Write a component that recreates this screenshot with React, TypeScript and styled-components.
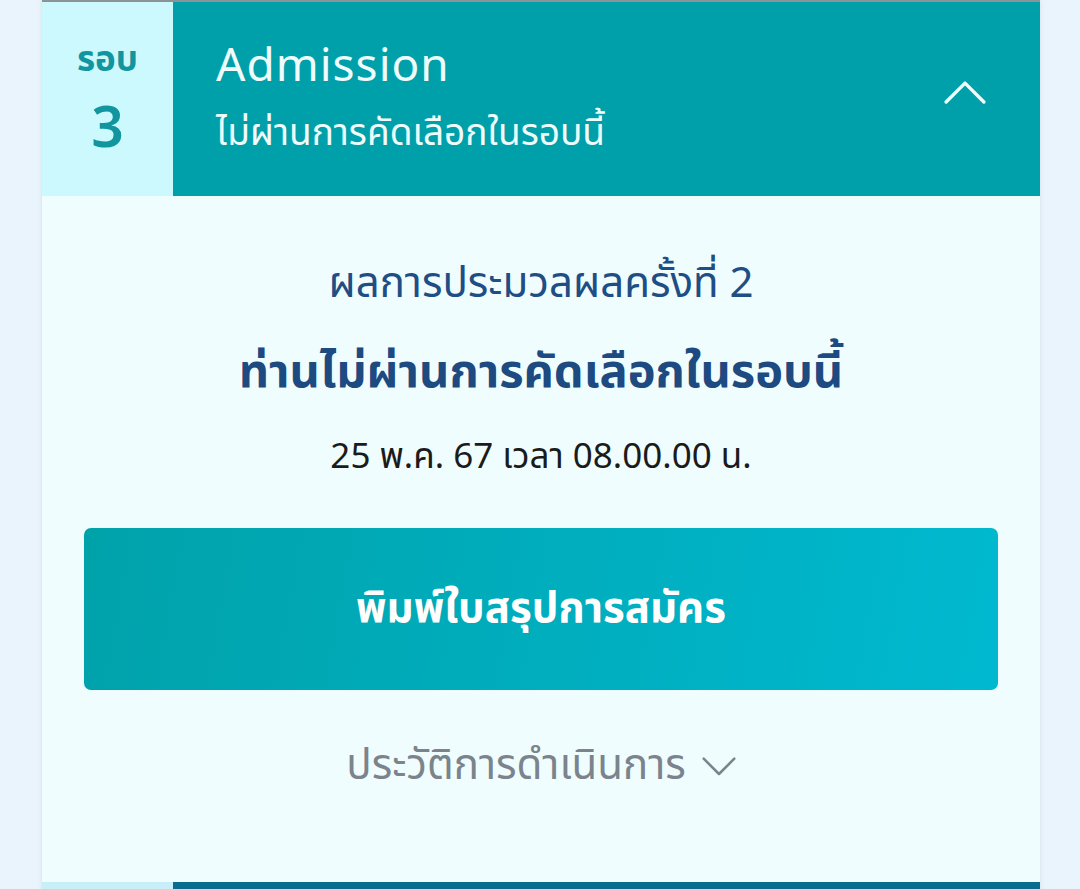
import React from "react";
import styled, { createGlobalStyle } from "styled-components";

const Global = createGlobalStyle`
  html, body { margin: 0; padding: 0; }
  body {
    background: #eaf4fc;
    font-family: "Noto Sans", "Noto Sans Thai", "Noto Sans Thai UI", sans-serif;
  }
`;

const Page = styled.div`
  width: 1080px;
  height: 889px;
  overflow: hidden;
  display: flex;
  align-items: flex-start;
  padding-left: 42px;
  box-sizing: border-box;
`;

const Column = styled.div`
  width: 998px;
  display: flex;
  flex-direction: column;
  border-top: 2px solid #8a9396;
  box-shadow: 0 0 4px rgba(120, 150, 180, 0.25);
`;

const Header = styled.div<{ $dark?: boolean }>`
  display: flex;
  height: ${(p) => (p.$dark ? "40px" : "194px")};
  flex-shrink: 0;
`;

const RoundCell = styled.div<{ $bg: string }>`
  width: 131px;
  background: ${(p) => p.$bg};
  display: flex;
  flex-direction: column;
  align-items: center;
  justify-content: center;
  color: #11969f;
`;

const RoundLabel = styled.div`
  font-size: 35px;
  font-weight: 700;
  line-height: 1;
  margin-top: -4px;
`;

const RoundNum = styled.div`
  font-size: 57px;
  font-weight: 600;
  line-height: 1;
  margin-top: 22px;
`;

const TitleCell = styled.div<{ $bg: string }>`
  flex: 1;
  background: ${(p) => p.$bg};
  display: flex;
  align-items: center;
  padding: 0 54px 0 43px;
  color: #effcfc;
`;

const TitleBlock = styled.div`
  flex: 1;
  display: flex;
  flex-direction: column;
  gap: 18px;
  margin-top: -8px;
`;

const Title = styled.div`
  font-size: 46px;
  line-height: 1.2;
  letter-spacing: 1px;
`;

const Subtitle = styled.div`
  font-size: 37px;
  line-height: 1.2;
`;

const UpIcon = styled.div`
  margin-top: -12px;
  display: flex;
`;

const Body = styled.div`
  background: #effdfe;
  height: 686px;
  flex-shrink: 0;
  display: flex;
  flex-direction: column;
  align-items: center;
  padding: 58px 42px 0;
  box-sizing: border-box;
`;

const Round = styled.div`
  font-size: 42px;
  color: #1f4e85;
  line-height: 1.3;
`;

const Result = styled.div`
  font-size: 47px;
  font-weight: 700;
  color: #1d4a80;
  line-height: 1.3;
  margin-top: 30px;
`;

const DateText = styled.div`
  font-size: 35px;
  color: #1b1b1b;
  line-height: 1.3;
  margin-top: 32px;
`;

const PrintButton = styled.button`
  margin-top: 51px;
  width: 914px;
  height: 162px;
  flex-shrink: 0;
  border: none;
  border-radius: 7px;
  background: linear-gradient(100deg, #00a2aa 0%, #00b9d0 100%);
  color: #ffffff;
  font-family: inherit;
  font-size: 42px;
  font-weight: 700;
  display: flex;
  align-items: center;
  justify-content: center;
`;

const History = styled.div`
  margin-top: 44px;
  display: flex;
  align-items: center;
  gap: 16px;
  font-size: 42px;
  color: #7b838c;
`;

function Chevron({ up, color, size, stroke }: { up?: boolean; color: string; size: number; stroke: number }) {
  return (
    <svg width={size} height={size * 0.55} viewBox="0 0 40 22" fill="none">
      <path
        d={up ? "M2 20 L20 2 L38 20" : "M2 2 L20 20 L38 2"}
        stroke={color}
        strokeWidth={stroke}
        strokeLinecap="round"
        strokeLinejoin="round"
      />
    </svg>
  );
}

export default function App() {
  return (
    <>
      <Global />
      <Page>
        <Column>
          <Header>
            <RoundCell $bg="#ccf9fd">
              <RoundLabel>รอบ</RoundLabel>
              <RoundNum>3</RoundNum>
            </RoundCell>
            <TitleCell $bg="#00a0aa">
              <TitleBlock>
                <Title>Admission</Title>
                <Subtitle>ไม่ผ่านการคัดเลือกในรอบนี้</Subtitle>
              </TitleBlock>
              <UpIcon>
                <Chevron up color="#effcfc" size={42} stroke={3.2} />
              </UpIcon>
            </TitleCell>
          </Header>
          <Body>
            <Round>ผลการประมวลผลครั้งที่ 2</Round>
            <Result>ท่านไม่ผ่านการคัดเลือกในรอบนี้</Result>
            <DateText>25 พ.ค. 67 เวลา 08.00.00 น.</DateText>
            <PrintButton>พิมพ์ใบสรุปการสมัคร</PrintButton>
            <History>
              ประวัติการดำเนินการ
              <Chevron color="#7b838c" size={34} stroke={3} />
            </History>
          </Body>
          <Header $dark>
            <RoundCell $bg="#c8eef8" />
            <TitleCell $bg="#076c8f" />
          </Header>
        </Column>
      </Page>
    </>
  );
}
